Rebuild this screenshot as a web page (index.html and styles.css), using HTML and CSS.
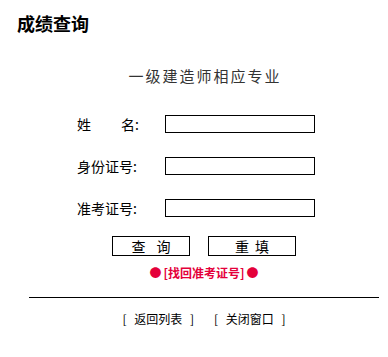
FILE: index.html
```html
<!DOCTYPE html>
<html lang="zh-CN">
<head>
<meta charset="utf-8">
<title>成绩查询</title>
<link rel="stylesheet" href="styles.css">
</head>
<body>
<h1 class="title">成绩查询</h1>
<div class="content">
  <div class="subtitle">一级建造师相应专业</div>
  <form class="form">
    <div class="row"><label class="label"><span class="name-a">姓</span>名:</label><input class="field" type="text"></div>
    <div class="row"><label class="label">身份证号:</label><input class="field" type="text"></div>
    <div class="row"><label class="label">准考证号:</label><input class="field" type="text"></div>
    <div class="buttons">
      <button type="button" class="btn btn-query">查 询</button>
      <button type="reset" class="btn btn-reset">重 填</button>
    </div>
  </form>
  <div class="retrieve"><span class="dot">●</span>[找回准考证号]<span class="dot">●</span></div>
  <div class="rule"></div>
  <div class="links"><span class="link">[ 返回列表 ]</span><span class="link">[ 关闭窗口 ]</span></div>
</div>
</body>
</html>
```

FILE: styles.css
```css
html, body {
  margin: 0;
  padding: 0;
  background: #fff;
}
body {
  font-family: "Noto Sans CJK SC", "Liberation Sans", sans-serif;
  color: #000;
  padding-top: 13px;
}
.title {
  margin: 0 0 0 17px;
  font-size: 18px;
  line-height: 20px;
  font-weight: bold;
}
.content {
  margin-left: 29px;
  width: 350px;
}
.subtitle {
  margin-top: 33px;
  text-align: center;
  font-size: 15px;
  line-height: 20px;
  letter-spacing: 2px;
  color: #333;
  padding-left: 2px;
}
.form {
  margin: 29px 0 0 0;
  display: flex;
  flex-direction: column;
  gap: 24px;
}
.row {
  display: flex;
  align-items: center;
  padding-left: 48px;
  height: 18px;
}
.label {
  width: 88px;
  font-size: 14px;
  line-height: 18px;
}
.name-a {
  display: inline-block;
  width: 44px;
}
.field {
  box-sizing: border-box;
  width: 150px;
  height: 18px;
  margin: 0;
  padding: 0;
  border: 1px solid #000;
  background: #fff;
}
.buttons {
  display: flex;
  justify-content: center;
  gap: 18px;
  margin-top: -5px;
}
.btn {
  box-sizing: border-box;
  height: 20px;
  margin: 0;
  padding: 0;
  border: 1px solid #000;
  background: #fff;
  font-family: "Noto Sans CJK SC", "Liberation Sans", sans-serif;
  font-size: 14px;
  line-height: 18px;
  color: #000;
}
.btn-query {
  width: 78px;
  word-spacing: 8px;
}
.btn-reset {
  width: 88px;
  word-spacing: 3px;
}
.retrieve {
  margin-top: 9px;
  text-align: center;
  font-size: 12px;
  line-height: 16px;
  font-weight: bold;
  color: #e4003a;
}
.dot {
  margin: 0 2px;
}
.rule {
  margin-top: 16px;
  height: 1px;
  background: #000;
}
.links {
  margin-top: 13px;
  display: flex;
  justify-content: center;
  gap: 20px;
  font-size: 12px;
  line-height: 16px;
}
.link {
  white-space: pre;
  word-spacing: 5px;
}
```
